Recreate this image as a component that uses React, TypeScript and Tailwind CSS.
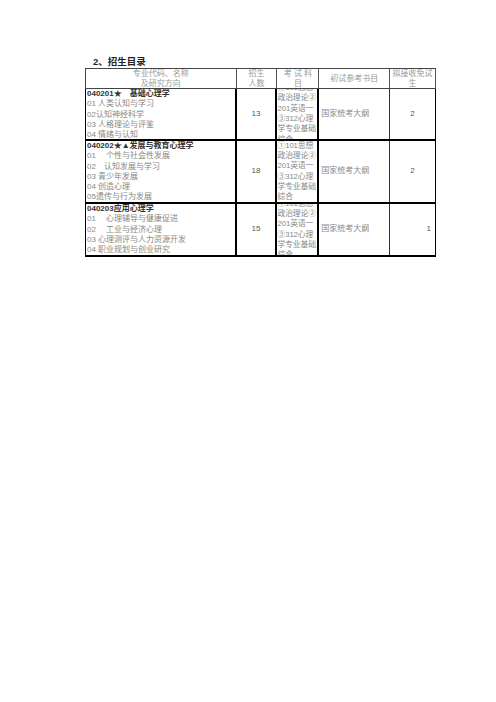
import React from 'react';

const font = { fontFamily: '"Liberation Sans", "Noto Sans CJK SC", sans-serif' };

interface RowData {
  height: string;
  lines: string[];
  quota: string;
  exempt: string;
  exemptRight?: boolean;
}

const rows: RowData[] = [
  {
    height: 'h-[52px]',
    lines: ['040201★　基础心理学', '01 人类认知与学习', '02认知神经科学', '03 人格理论与评鉴', '04 情绪与认知'],
    quota: '13',
    exempt: '2',
  },
  {
    height: 'h-[63px]',
    lines: [
      '040202★▲发展与教育心理学',
      '01　 个性与社会性发展',
      '02　认知发展与学习',
      '03 青少年发展',
      '04 创造心理',
      '05遗传与行为发展',
    ],
    quota: '18',
    exempt: '2',
  },
  {
    height: 'h-[53px]',
    lines: ['040203应用心理学', '01　 心理辅导与健康促进', '02　 工业与经济心理', '03 心理测评与人力资源开发', '04 职业规划与创业研究'],
    quota: '15',
    exempt: '1',
    exemptRight: true,
  },
];

const subjects = ['①101思想', '政治理论②', '201英语一', '③312心理', '学专业基础', '综合'];

export default function App() {
  return (
    <div className="min-h-[702px] bg-white pt-[56px] pl-[85px]" style={font}>
      <div className="pl-[8px] h-[12px] text-[9.5px] leading-[12px] font-semibold text-[#222]">2、招生目录</div>
      <div className="w-[351px] text-[8px] leading-[10.3px]">
        {/* header */}
        <div className="flex h-[21px] border-t border-b border-l border-[#444] text-[#999] leading-[10px]">
          <div className="w-[151px] border-r border-[#555] text-center">
            <div>专业代码、名称</div>
            <div>及研究方向</div>
          </div>
          <div className="w-[41px] border-r border-[#555] text-center">
            <div>招生</div>
            <div>人数</div>
          </div>
          <div className="w-[42px] border-r border-[#555] text-center">
            <div>考 试 科</div>
            <div>目</div>
          </div>
          <div className="w-[71px] border-r border-[#555] flex items-center justify-center">初试参考书目</div>
          <div className="w-[46px] border-r border-[#555] text-center">
            <div>拟接收免试</div>
            <div>生</div>
          </div>
        </div>
        {rows.map((r) => (
          <div key={r.quota} className={`flex ${r.height} border-b-2 border-l border-black`}>
            <div className="w-[151px] border-r-2 border-black pl-[1px] overflow-hidden whitespace-nowrap">
              {r.lines.map((l, i) => (
                <div key={i} className={i === 0 ? 'font-bold text-[#333]' : 'text-[#888]'}>
                  {l}
                </div>
              ))}
            </div>
            <div className="w-[41px] border-r-2 border-black flex items-center justify-center text-[#555]">{r.quota}</div>
            <div className="w-[42px] border-r-2 border-black flex flex-col justify-center overflow-hidden whitespace-nowrap text-[#888] text-[7.8px] tracking-[-0.1px]">
              {subjects.map((s, i) => (
                <div key={i}>{s}</div>
              ))}
            </div>
            <div className="w-[71px] border-r border-[#333] pl-[2px] flex items-center text-[#888]">国家统考大纲</div>
            <div
              className={`w-[46px] border-r border-black flex items-center text-[#555] ${
                r.exemptRight ? 'justify-end pr-[4px]' : 'justify-center'
              }`}
            >
              {r.exempt}
            </div>
          </div>
        ))}
      </div>
    </div>
  );
}
